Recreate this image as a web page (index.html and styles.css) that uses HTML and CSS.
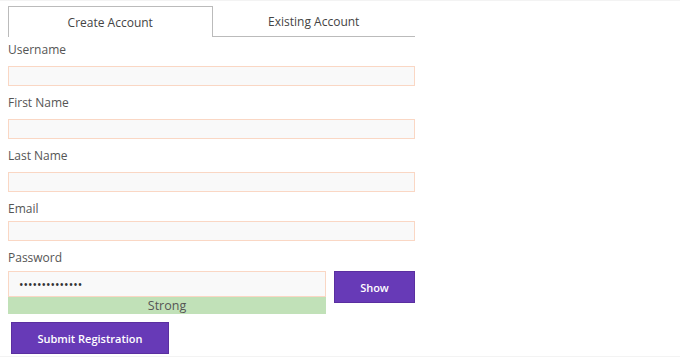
FILE: index.html
```html
<!DOCTYPE html>
<html>
<head>
<meta charset="utf-8">
<link rel="stylesheet" href="styles.css">
</head>
<body>
<div class="page">
  <div class="form">
    <div class="tabs">
      <div class="tab active">Create Account</div>
      <div class="tab">Existing Account</div>
    </div>
    <div class="field first">
      <label class="label">Username</label>
      <input class="input" type="text">
    </div>
    <div class="field">
      <label class="label">First Name</label>
      <input class="input" type="text">
    </div>
    <div class="field">
      <label class="label">Last Name</label>
      <input class="input" type="text">
    </div>
    <div class="field tight">
      <label class="label">Email</label>
      <input class="input" type="text">
    </div>
    <div class="field pw">
      <label class="label">Password</label>
      <div class="pw-row">
        <div class="pw-col">
          <input class="input pw-input" type="password" value="abcdefghijklmn">
          <div class="strength">Strong</div>
        </div>
        <button class="btn show">Show</button>
      </div>
    </div>
    <button class="btn submit">Submit Registration</button>
  </div>
</div>
</body>
</html>
```
FILE: styles.css
```css
* { box-sizing: border-box; }
html, body { margin: 0; padding: 0; background: #fff; }
body {
  font-family: "Open Sans", "Liberation Sans", sans-serif;
  color: #555;
  font-size: 12px;
}
.page {
  width: 680px;
  height: 357px;
  border-top: 1px solid #f3f3f3;
  border-bottom: 1px solid #f3f3f3;
  padding: 5px 0 0 8px;
}
.form { width: 407px; }
.tabs { display: flex; height: 31px; }
.tab {
  flex: 1;
  display: flex;
  align-items: center;
  justify-content: center;
  font-size: 12px;
  color: #444;
  border-bottom: 1px solid #bbb;
}
.tab.active {
  border: 1px solid #bbb;
  border-bottom: none;
}
.field { display: flex; flex-direction: column; margin-bottom: 8px; }
.field.first { margin-top: 4px; }
.field.tight { margin-bottom: 8px; }
.field.tight .label { margin-bottom: 3px; }
.label { line-height: 18px; margin-bottom: 7px; color: #555; }
.input {
  height: 20px;
  width: 100%;
  border: 1px solid #fad7c4;
  background: #f9f9f9;
  margin: 0;
  padding: 0 10px;
  font-family: inherit;
}
.field.pw .label { margin-bottom: 4px; }
.pw-row { display: flex; align-items: flex-start; gap: 8px; }
.pw-col { width: 318px; }
.pw-input { height: 26px; font-size: 12px; color: #333; }
.strength {
  height: 17px;
  background: #c1e1b8;
  text-align: center;
  line-height: 17px;
  font-size: 12.5px;
  color: #555;
}
.btn {
  background: #673ab7;
  color: #fff;
  border: 1px solid #5a2fa0;
  font-family: inherit;
  font-size: 11px;
  font-weight: 600;
  margin: 0;
  padding: 0;
}
.show { width: 81px; height: 32px; }
.submit { width: 158px; height: 32px; margin-left: 3px; }
.field.pw { margin-bottom: 8px; }
```
